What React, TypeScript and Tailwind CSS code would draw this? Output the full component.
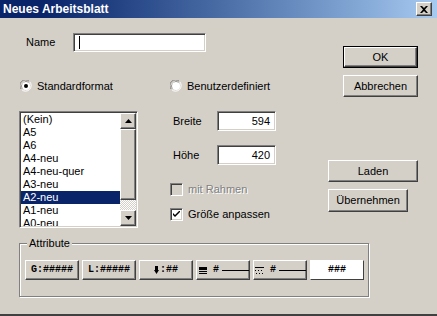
import React from "react";

const sunken =
  "border border-t-[#808080] border-l-[#808080] border-r-white border-b-white shadow-[inset_1px_1px_0_#404040,inset_-1px_-1px_0_#d4d0c8]";
const raised =
  "border border-t-white border-l-white border-r-[#404040] border-b-[#404040] shadow-[inset_-1px_-1px_0_#808080]";

function Btn({ label, w, h = 22, def = false }: { label: string; w: string; h?: number; def?: boolean }) {
  if (def) {
    return (
      <div className={`${w} h-[22px] border border-black flex`}>
        <div className={`flex-1 flex items-center justify-center ${raised}`}>{label}</div>
      </div>
    );
  }
  return (
    <div className={`${w} ${h === 23 ? "h-[23px]" : "h-[22px]"} flex items-center justify-center ${raised}`}>{label}</div>
  );
}

function Radio({ checked }: { checked?: boolean }) {
  return (
    <svg width="12" height="12" viewBox="0 0 12 12" className="shrink-0">
      <path d="M1.5 9.5 A5.5 5.5 0 0 1 9.5 1.5" fill="none" stroke="#808080" />
      <path d="M9.5 1.5 A5.5 5.5 0 0 1 1.5 9.5" fill="none" stroke="#ffffff" />
      <path d="M2.5 8.5 A4.5 4.5 0 0 1 8.5 2.5" fill="none" stroke="#404040" />
      <path d="M8.5 2.5 A4.5 4.5 0 0 1 2.5 8.5" fill="none" stroke="#d4d0c8" />
      <circle cx="6" cy="6" r="4" fill="#ffffff" />
      {checked && <circle cx="6" cy="6" r="2" fill="#000" />}
    </svg>
  );
}

function Check({ checked, disabled }: { checked?: boolean; disabled?: boolean }) {
  return (
    <div className={`w-[13px] h-[13px] shrink-0 flex items-center justify-center ${sunken} ${disabled ? "bg-[#d4d0c8]" : "bg-white"}`}>
      {checked && (
        <svg width="7" height="7" viewBox="0 0 7 7">
          <path d="M0 2 L0 4 L2 6 L7 1 L7 -1 L2 4 Z" fill="#000" />
        </svg>
      )}
    </div>
  );
}

function Arrow({ up }: { up?: boolean }) {
  return (
    <svg width="7" height="4" viewBox="0 0 7 4">
      {up ? <path d="M3.5 0 L7 4 L0 4 Z" fill="#000" /> : <path d="M0 0 L7 0 L3.5 4 Z" fill="#000" />}
    </svg>
  );
}

const items = ["(Kein)", "A5", "A6", "A4-neu", "A4-neu-quer", "A3-neu", "A2-neu", "A1-neu", "A0-neu"];

export default function App() {
  return (
    <div className="w-[437px] h-[316px] flex flex-col bg-[#d4d0c8] overflow-hidden text-[11px] text-black font-['Liberation_Sans',Arial,sans-serif] leading-none">
      {/* Title bar */}
      <div className="h-[18px] shrink-0 flex items-center justify-between pl-[3px] pr-[5px] bg-gradient-to-r from-[#0a246a] from-[10%] to-[#a6caf0]">
        <span className="text-white font-bold text-[12px]">Neues Arbeitsblatt</span>
        <div className={`w-[16px] h-[14px] flex items-center justify-center bg-[#d4d0c8] ${raised}`}>
          <svg width="8" height="7" viewBox="0 0 8 7">
            <path d="M0 0 L2 0 L4 2 L6 0 L8 0 L5 3.5 L8 7 L6 7 L4 5 L2 7 L0 7 L3 3.5 Z" fill="#000" />
          </svg>
        </div>
      </div>

      {/* Body */}
      <div className="flex-1 flex flex-col">
        <div className="flex items-start">
          {/* left + middle */}
          <div className="w-[328px] flex flex-col">
            <div className="mt-[15px] pl-[26px] flex items-center h-[19px]">
              <span className="w-[47px]">Name</span>
              <div className={`w-[133px] h-[19px] bg-white flex items-center pl-[5px] ${sunken}`}>
                <div className="w-px h-[13px] bg-black" />
              </div>
            </div>
            <div className="mt-[28px] flex items-center h-[12px]">
              <div className="w-[170px] pl-[20px] flex items-center">
                <Radio checked />
                <span className="ml-[5px]">Standardformat</span>
              </div>
              <div className="flex items-center">
                <Radio />
                <span className="ml-[5px]">Benutzerdefiniert</span>
              </div>
            </div>
            <div className="mt-[19px] flex items-start">
              {/* listbox */}
              <div className={`ml-[19px] w-[119px] h-[117px] bg-white flex overflow-hidden ${sunken} p-[1px]`}>
                <div className="flex-1 flex flex-col overflow-hidden">
                  {items.map((t) => (
                    <div
                      key={t}
                      className={`h-[13px] shrink-0 pl-[2px] flex items-center ${t === "A2-neu" ? "bg-[#0a246a] text-white" : ""}`}
                    >
                      {t}
                    </div>
                  ))}
                </div>
                <div className="w-[16px] flex flex-col">
                  <div className={`h-[16px] shrink-0 bg-[#d4d0c8] flex items-center justify-center ${raised}`}>
                    <Arrow up />
                  </div>
                  <div className={`h-[71px] shrink-0 bg-[#d4d0c8] ${raised}`} />
                  <div className="flex-1 bg-[repeating-conic-gradient(#d4d0c8_0_25%,#ffffff_0_50%)] bg-[length:2px_2px]" />
                  <div className={`h-[16px] shrink-0 bg-[#d4d0c8] flex items-center justify-center ${raised}`}>
                    <Arrow />
                  </div>
                </div>
              </div>
              {/* middle column */}
              <div className="ml-[32px] flex flex-col">
                <div className="flex items-center h-[20px]">
                  <span className="w-[47px] pl-[3px]">Breite</span>
                  <div className={`w-[59px] h-[20px] bg-white flex items-center justify-end pr-[5px] ${sunken}`}>594</div>
                </div>
                <div className="mt-[14px] flex items-center h-[20px]">
                  <span className="w-[47px] pl-[3px]">Höhe</span>
                  <div className={`w-[59px] h-[20px] bg-white flex items-center justify-end pr-[5px] ${sunken}`}>420</div>
                </div>
                <div className="mt-[18px] flex items-center h-[13px]">
                  <Check disabled />
                  <span className="ml-[5px] text-[#808080] [text-shadow:1px_1px_0_#fff]">mit Rahmen</span>
                </div>
                <div className="mt-[12px] flex items-center h-[13px]">
                  <Check checked />
                  <span className="ml-[5px]">Größe anpassen</span>
                </div>
              </div>
            </div>
          </div>
          {/* right column */}
          <div className="flex flex-col">
            <div className="mt-[28px] ml-[15px]">
              <Btn label="OK" w="w-[75px]" def />
            </div>
            <div className="mt-[7px] ml-[15px]">
              <Btn label="Abbrechen" w="w-[75px]" />
            </div>
            <div className="mt-[63px]">
              <Btn label="Laden" w="w-[90px]" />
            </div>
            <div className="mt-[7px]">
              <Btn label="Übernehmen" w="w-[80px]" h={23} />
            </div>
          </div>
        </div>

        {/* Attribute group */}
        <div className="relative mt-[15px] ml-[19px] w-[350px] h-[54px] border border-[#808080] shadow-[1px_1px_0_#fff,inset_1px_1px_0_#fff] pt-[16px] pl-[5px]">
          <span className="absolute left-[7px] top-[-6px] px-[2px] bg-[#d4d0c8]">Attribute</span>
          <div className="flex gap-[3px] font-['Liberation_Mono',monospace] font-bold text-[10px]">
            <div className={`w-[54px] h-[20px] flex items-center justify-center ${raised}`}>G:#####</div>
            <div className={`w-[54px] h-[20px] flex items-center justify-center ${raised}`}>L:#####</div>
            <div className={`w-[54px] h-[20px] flex items-center justify-center ${raised}`}>
              <svg width="5" height="8" viewBox="0 0 5 8" className="mr-[1px]">
                <rect x="1" y="0" width="3" height="5" fill="#000" />
                <path d="M0 4 L5 4 L2.5 8 Z" fill="#000" />
              </svg>
              :##
            </div>
            <div className={`w-[54px] h-[20px] flex items-center pl-[2px] ${raised}`}>
              <svg width="8" height="7" viewBox="0 0 8 7">
                <rect x="0" y="0" width="8" height="3" fill="#000" />
                <rect x="0" y="4" width="8" height="1" fill="#000" />
                <rect x="0" y="6" width="8" height="1" fill="#000" />
              </svg>
              <span className="ml-[6px]">#</span>
              <div className="ml-[3px] flex-1 h-px bg-black" />
            </div>
            <div className={`w-[54px] h-[20px] flex items-center pl-[1px] ${raised}`}>
              <svg width="9" height="7" viewBox="0 0 9 7">
                <rect x="0" y="0" width="9" height="1" fill="#000" />
                <path d="M0 3.5h1M3 3.5h1M6 3.5h1M1 6.5h1M4 6.5h1M7 6.5h1" stroke="#000" strokeWidth="1" />
              </svg>
              <span className="ml-[6px]">#</span>
              <div className="ml-[3px] flex-1 h-px bg-black" />
            </div>
            <div className="w-[54px] h-[20px] flex items-center justify-center bg-white border border-t-white border-l-white border-r-[#404040] border-b-[#404040]">
              ###
            </div>
          </div>
        </div>
      </div>
      <div className="h-[2px] shrink-0 bg-[#404040]" />
    </div>
  );
}
